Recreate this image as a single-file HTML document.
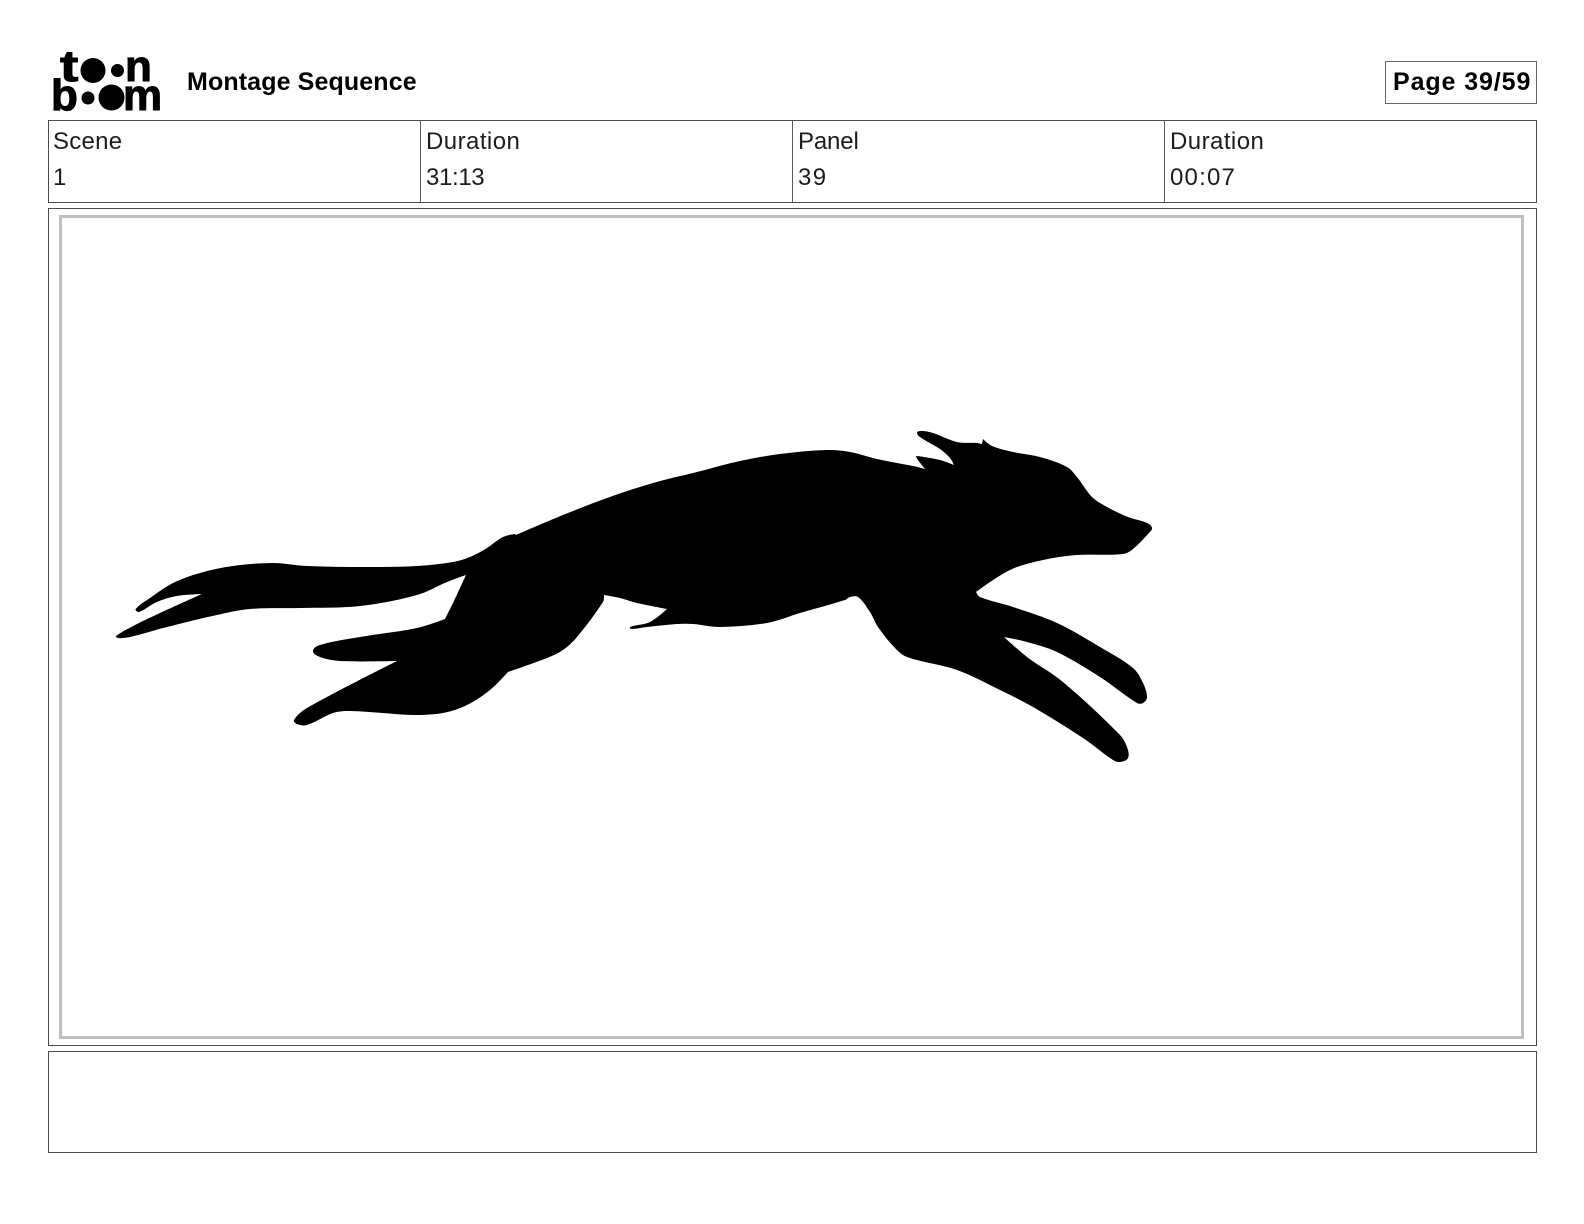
<!DOCTYPE html>
<html lang="en">
<head>
<meta charset="utf-8">
<title>Montage Sequence</title>
<style>
html,body{margin:0;padding:0;background:#fff;}
body{width:1584px;height:1224px;position:relative;overflow:hidden;font-family:"Liberation Sans",sans-serif;color:#000;}
.box{position:absolute;box-sizing:border-box;border:1px solid #4a4a4a;}
.t{position:absolute;white-space:nowrap;line-height:30px;}
.b{font-weight:700;font-size:25px;}
.l{font-size:24px;letter-spacing:.45px;color:#1c1c1c;}
.d{position:absolute;top:120px;width:1px;height:82px;background:#5a5a5a;}
</style>
</head>
<body>
<svg style="position:absolute;left:0;top:0" width="200" height="120" viewBox="0 0 200 120">
<g font-family="Liberation Sans, sans-serif" font-weight="700" font-size="44" fill="#000" stroke="#000" stroke-width="1">
<text transform="translate(60 81) scale(1.25 1)">t</text>
<text x="125" y="81">n</text>
<text x="51" y="110">b</text>
<text x="123" y="110">m</text>
</g>
<circle cx="93" cy="70.5" r="12.5"/>
<circle cx="117.5" cy="70.5" r="6.5"/>
<circle cx="88" cy="98" r="6.5"/>
<circle cx="111.5" cy="97.5" r="13"/>
</svg>

<div class="t b" style="left:187px;top:67px;letter-spacing:.12px;">Montage Sequence</div>

<div class="box" style="left:1385px;top:61px;width:152px;height:43px;border-color:#666;"></div>
<div class="t b" style="left:1393px;top:67px;letter-spacing:.9px;">Page 39/59</div>

<div class="box" style="left:48px;top:120px;width:1489px;height:83px;"></div>
<div class="d" style="left:420px"></div>
<div class="d" style="left:792px"></div>
<div class="d" style="left:1164px"></div>

<div class="t l" style="left:53px;top:127px;letter-spacing:.25px;">Scene</div>
<div class="t l" style="left:53px;top:163px;">1</div>
<div class="t l" style="left:426px;top:127px;">Duration</div>
<div class="t l" style="left:426px;top:163px;letter-spacing:-.35px;">31:13</div>
<div class="t l" style="left:798px;top:127px;letter-spacing:-.15px;">Panel</div>
<div class="t l" style="left:798px;top:163px;letter-spacing:1.4px;">39</div>
<div class="t l" style="left:1170px;top:127px;">Duration</div>
<div class="t l" style="left:1170px;top:163px;letter-spacing:1.2px;">00:07</div>

<div class="box" style="left:48px;top:208px;width:1489px;height:838px;"></div>
<div class="box" style="left:59px;top:215px;width:1465px;height:824px;border:3px solid #bfbfbf;"></div>
<div class="box" style="left:48px;top:1051px;width:1489px;height:102px;"></div>

<svg style="position:absolute;left:0;top:0" width="1584" height="1224" viewBox="0 0 1584 1224">
<path id="wolf" fill="#000" d=""/>
</svg>
<script>
var p=[[201.7,594,1],[176.7,596],[156.7,602],[139,612],[135.7,609],[150,598],[173,583],[200,573],[233,566],[273,563],[307,566],[367,567],[417,566],[453,562],[470,557],[487,548],[503,537],[515,534,1],[516,535,1],[563,515],[607,498],[653,483],[697,472],[740,461],[780,454],[827,450],[850,452],[877,459],[913,466],[925,469,1],[916,457],[917,456],[940,460],[954,465,1],[950,458],[940,449],[923,439],[917,433],[922,431],[933,433],[957,442],[977,443],[982,444,1],[983,439,1],[992,446],[1013,452],[1040,457],[1067,467],[1077,477],[1092,497],[1107,507],[1128,517],[1147,523],[1152,528],[1148,534],[1133,549],[1123,554],[1077,555],[1043,560],[1010,570],[976,592,1],[980,597],[1013,607],[1057,623],[1100,647],[1133,668],[1143,683],[1147,697],[1143,703],[1137,703],[1100,677],[1057,652],[1027,642],[1004,637,1],[1027,657],[1063,682],[1120,735],[1127,747],[1128,758],[1120,762],[1113,760],[1083,738],[1033,707],[1000,690],[957,670],[907,657],[895,648],[878,627],[870,612],[858,597],[850,597],[845,600],[800,613],[767,623],[720,627],[693,624],[677,624],[647,627],[631,629],[630,627],[650,622],[667,609,1],[637,603],[620,598],[604,595,1],[603,602],[577,637],[563,650],[547,658],[508,672,1],[490,690],[467,705],[443,713],[413,715],[383,713],[350,711],[333,713],[307,725],[297,724],[294,720],[307,708],[397,661,1],[340,661],[320,657],[313,651],[320,645],[360,637],[417,628],[445,619,1],[453,603],[466,575,1],[447,582],[417,595],[360,606],[300,608],[250,609],[217,615],[167,627],[130,637],[118,638],[116,636],[137,624],[160,613]];
var n=p.length,d="M"+p[0][0]+" "+p[0][1];
function tan(a,c){var x=c[0]-a[0],y=c[1]-a[1],l=Math.sqrt(x*x+y*y)||1;return [x/l,y/l];}
for(var i=0;i<n;i++){
 var a=p[(i-1+n)%n],b=p[i],c=p[(i+1)%n],e=p[(i+2)%n];
 var s=Math.sqrt((c[0]-b[0])*(c[0]-b[0])+(c[1]-b[1])*(c[1]-b[1]))/3;
 var t1=tan(a,c),t2=tan(b,e);
 var c1x=b[2]?b[0]:b[0]+t1[0]*s,c1y=b[2]?b[1]:b[1]+t1[1]*s;
 var c2x=c[2]?c[0]:c[0]-t2[0]*s,c2y=c[2]?c[1]:c[1]-t2[1]*s;
 d+="C"+c1x.toFixed(1)+" "+c1y.toFixed(1)+" "+c2x.toFixed(1)+" "+c2y.toFixed(1)+" "+c[0]+" "+c[1];
}
document.getElementById("wolf").setAttribute("d",d+"Z");
</script>
</body>
</html>
